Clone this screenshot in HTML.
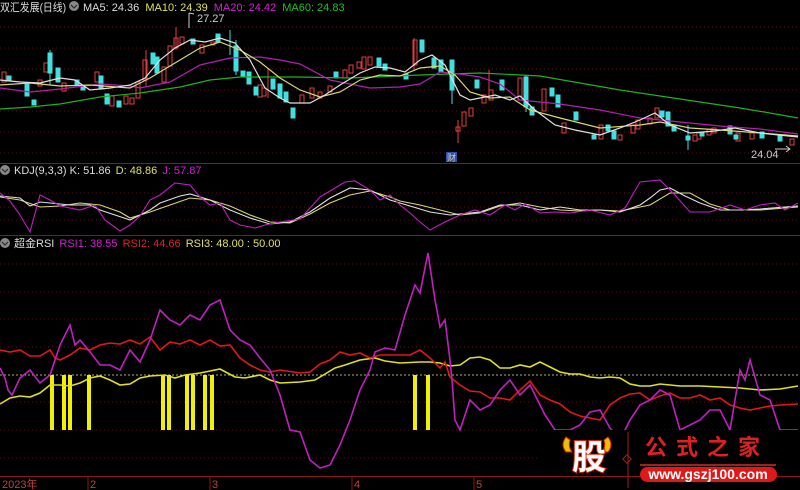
<!DOCTYPE html>
<html><head><meta charset="utf-8"><style>
body{margin:0;background:#000;width:800px;height:490px;overflow:hidden;font-family:"Liberation Sans","Noto Sans CJK SC",sans-serif}
svg{display:block}
text{font-family:"Liberation Sans","Noto Sans CJK SC",sans-serif}
</style></head><body>
<svg width="800" height="490" viewBox="0 0 800 490" xmlns="http://www.w3.org/2000/svg">
<rect width="800" height="490" fill="#000"/>
<g stroke="#5a1010" stroke-dasharray="1 3" stroke-width="1">
<line x1="0" y1="27" x2="800" y2="27"/><line x1="0" y1="48" x2="800" y2="48"/><line x1="0" y1="69" x2="800" y2="69"/><line x1="0" y1="90" x2="800" y2="90"/><line x1="0" y1="111" x2="800" y2="111"/><line x1="0" y1="132" x2="800" y2="132"/><line x1="0" y1="153" x2="800" y2="153"/>
<line x1="0" y1="193" x2="800" y2="193"/><line x1="0" y1="207" x2="800" y2="207"/><line x1="0" y1="220" x2="800" y2="220"/>
<line x1="0" y1="264" x2="800" y2="264"/><line x1="0" y1="292" x2="800" y2="292"/><line x1="0" y1="319" x2="800" y2="319"/><line x1="0" y1="347" x2="800" y2="347"/><line x1="0" y1="402" x2="800" y2="402"/><line x1="0" y1="430" x2="800" y2="430"/><line x1="0" y1="458" x2="800" y2="458"/>
</g>
<line x1="0" y1="163.5" x2="800" y2="163.5" stroke="#8a1515"/>
<line x1="0" y1="235.5" x2="800" y2="235.5" stroke="#8a1515"/>
<line x1="0" y1="476.5" x2="800" y2="476.5" stroke="#8a1515"/>
<line x1="0" y1="375" x2="800" y2="375" stroke="#b0b060" stroke-dasharray="2 2"/>
<g stroke="#8a1515"><line x1="88" y1="476" x2="88" y2="490"/><line x1="210" y1="476" x2="210" y2="490"/><line x1="352" y1="476" x2="352" y2="490"/><line x1="474" y1="476" x2="474" y2="490"/></g>
<g fill="#c04040" font-size="11"><text x="2" y="488">2023年</text><text x="90" y="488">2</text><text x="212" y="488">3</text><text x="354" y="488">4</text><text x="476" y="488">5</text></g>

<g stroke-width="1">
<g stroke="#e04040" fill="none">
<rect x="2" y="72" width="4" height="10"/><rect x="38" y="80" width="4" height="6"/><rect x="44" y="63" width="4" height="9"/><rect x="62" y="83" width="4" height="8"/><rect x="95" y="72" width="4" height="10"/><rect x="110" y="96" width="4" height="10"/><rect x="124" y="96" width="4" height="8"/><rect x="130" y="98" width="4" height="6"/><rect x="136" y="82" width="4" height="16"/><rect x="143" y="60" width="4" height="20"/><rect x="162" y="67" width="4" height="15"/><rect x="168" y="46" width="4" height="20"/><rect x="174" y="38" width="4" height="10"/><rect x="180" y="37" width="4" height="7"/><rect x="200" y="45" width="4" height="8"/><rect x="211" y="42" width="4" height="3"/>
<rect x="258" y="85" width="4" height="12"/><rect x="262" y="88" width="4" height="8"/><rect x="300" y="95" width="4" height="8"/><rect x="310" y="88" width="4" height="10"/><rect x="318" y="92" width="4" height="6"/><rect x="328" y="86" width="4" height="6"/><rect x="343" y="70" width="4" height="8"/><rect x="349" y="65" width="4" height="8"/><rect x="357" y="62" width="4" height="6"/><rect x="362" y="57" width="4" height="12"/><rect x="368" y="57" width="4" height="8"/>
<rect x="413" y="40" width="4" height="25"/><rect x="456" y="127" width="4" height="4"/><rect x="462" y="112" width="4" height="14"/><rect x="469" y="108" width="4" height="8"/><rect x="482" y="95" width="4" height="8"/><rect x="489" y="90" width="4" height="10"/><rect x="518" y="78" width="4" height="22"/><rect x="542" y="89" width="4" height="22"/><rect x="562" y="123" width="4" height="10"/><rect x="599" y="125" width="4" height="14"/><rect x="618" y="135" width="4" height="5"/><rect x="631" y="125" width="4" height="8"/><rect x="636" y="120" width="4" height="9"/><rect x="648" y="118" width="4" height="6"/><rect x="655" y="108" width="4" height="10"/><rect x="693" y="135" width="4" height="6"/><rect x="697" y="133" width="4" height="6"/><rect x="707" y="129" width="4" height="6"/><rect x="712" y="128" width="4" height="5"/><rect x="736" y="133" width="4" height="8"/><rect x="750" y="133" width="4" height="6"/><rect x="790" y="139" width="4" height="6"/>
</g>
<g stroke="#40e0e0" fill="#40e0e0">
<rect x="7" y="76" width="4" height="5"/><rect x="25" y="84" width="4" height="12"/><rect x="32" y="100" width="4" height="5"/><rect x="48" y="53" width="4" height="20"/><rect x="56" y="68" width="4" height="14"/><rect x="75" y="80" width="4" height="5"/><rect x="81" y="86" width="4" height="4"/><rect x="99" y="76" width="4" height="13"/><rect x="105" y="94" width="4" height="10"/><rect x="117" y="101" width="4" height="6"/><rect x="151" y="53" width="4" height="11"/><rect x="155" y="57" width="4" height="16"/><rect x="191" y="39" width="4" height="5"/><rect x="216" y="34" width="4" height="8"/><rect x="234" y="46" width="4" height="25"/><rect x="241" y="71" width="4" height="5"/><rect x="247" y="72" width="4" height="12"/><rect x="254" y="87" width="4" height="8"/><rect x="271" y="79" width="4" height="10"/><rect x="278" y="84" width="4" height="14"/><rect x="284" y="92" width="4" height="10"/><rect x="291" y="108" width="4" height="10"/>
<rect x="334" y="72" width="4" height="6"/><rect x="377" y="58" width="4" height="8"/><rect x="383" y="64" width="4" height="6"/><rect x="404" y="74" width="4" height="5"/><rect x="420" y="40" width="4" height="12"/><rect x="432" y="58" width="4" height="10"/><rect x="439" y="60" width="4" height="12"/><rect x="450" y="60" width="4" height="30"/><rect x="475" y="80" width="4" height="8"/><rect x="500" y="80" width="4" height="10"/><rect x="524" y="77" width="4" height="30"/><rect x="530" y="107" width="4" height="8"/><rect x="550" y="88" width="4" height="8"/><rect x="556" y="95" width="4" height="12"/><rect x="574" y="112" width="4" height="8"/><rect x="592" y="135" width="4" height="4"/><rect x="606" y="125" width="4" height="6"/><rect x="612" y="131" width="4" height="8"/><rect x="660" y="111" width="4" height="6"/><rect x="666" y="112" width="4" height="14"/><rect x="672" y="125" width="4" height="6"/><rect x="686" y="136" width="4" height="4"/><rect x="700" y="133" width="4" height="3"/><rect x="728" y="126" width="4" height="8"/><rect x="734" y="135" width="4" height="4"/><rect x="760" y="132" width="4" height="6"/><rect x="778" y="136" width="4" height="5"/>
</g>
<g stroke="#e04040"><line x1="146" y1="50" x2="146" y2="86"/><line x1="176" y1="27" x2="176" y2="50"/><line x1="414" y1="38" x2="414" y2="70"/><line x1="458" y1="120" x2="458" y2="143"/><line x1="489" y1="70" x2="489" y2="100"/><line x1="268" y1="68" x2="268" y2="98"/></g>
<g stroke="#40e0e0"><line x1="50" y1="50" x2="50" y2="85"/><line x1="236" y1="40" x2="236" y2="75"/><line x1="452" y1="60" x2="452" y2="104"/><line x1="526" y1="75" x2="526" y2="112"/><line x1="688" y1="125" x2="688" y2="150"/><line x1="230" y1="30" x2="230" y2="55"/></g>
</g>
<g fill="none" stroke-width="1.2">
<polyline stroke="#20b020" points="0,109 30,107 60,104 100,97 140,93 180,87 210,80 240,77 300,77 350,78 420,75 480,73 540,76 580,83 620,90 660,96 700,102 740,108 770,113 798,118"/>
<polyline stroke="#b020b0" points="0,88 30,92 60,89 100,84 130,86 140,88 170,82 200,65 230,58 260,57 280,60 300,64 330,80 370,88 400,87 420,84 440,72 460,74 480,77 500,84 520,100 560,104 600,110 640,118 680,122 720,126 760,129 798,134"/>
<polyline stroke="#d8d870" points="0,85 30,83 60,86 90,85 130,88 150,78 180,60 200,48 220,42 240,50 260,62 280,78 300,90 320,97 340,92 360,80 380,75 400,76 420,68 440,66 455,75 470,92 490,98 510,97 530,110 560,118 600,128 640,125 660,122 690,128 720,130 760,133 798,136"/>
<polyline stroke="#e0e0e0" points="0,80 20,82 40,83 60,78 75,80 90,90 110,88 130,85 145,78 160,60 175,48 190,40 205,42 220,38 235,43 250,60 265,88 280,98 290,103 310,103 325,95 340,85 360,73 375,67 390,68 405,72 420,60 432,55 445,65 460,95 470,100 480,98 495,95 510,100 520,96 535,110 555,125 575,130 600,135 620,128 640,120 655,113 670,125 690,133 715,131 735,128 760,133 798,137"/>
</g>
<g stroke="#ccc" fill="none"><path d="M189 13 L189 28 M189 13 L194 14"/><path d="M775 149 L790 149 M786 146 L790 149 L786 152"/></g>
<text x="197" y="22" fill="#ccc" font-size="11">27.27</text>
<text x="751" y="158" fill="#ccc" font-size="11">24.04</text>
<rect x="446" y="152" width="11" height="10" fill="#3050a0"/><text x="447" y="161" fill="#ccc" font-size="9">财</text>

<text x="0" y="11" font-size="11" fill="#ddd" textLength="66" lengthAdjust="spacingAndGlyphs">双汇发展(日线)</text>
<circle cx="74" cy="6" r="5" fill="#888"/><path d="M71 5 L74 8 L77 5" stroke="#222" fill="none"/>
<text x="83" y="11" font-size="11"><tspan fill="#ddd">MA5: 24.36 </tspan><tspan fill="#e0e060" dx="3">MA10: 24.39 </tspan><tspan fill="#d020d0" dx="3">MA20: 24.42 </tspan><tspan fill="#20c020" dx="3">MA60: 24.83</tspan></text>

<circle cx="5" cy="170" r="5" fill="#888"/><path d="M2 169 L5 172 L8 169" stroke="#222" fill="none"/>
<text x="14" y="174" font-size="11"><tspan fill="#ddd">KDJ(9,3,3)  K: 51.86 </tspan><tspan fill="#e0e060" dx="2">D: 48.86 </tspan><tspan fill="#d020d0" dx="2">J: 57.87</tspan></text>
<g fill="none" stroke-width="1.1">
<polyline stroke="#d8d870" points="0,197 20,200 40,207 60,206 80,203 100,205 120,212 130,218 150,212 170,205 190,198 210,200 230,206 250,215 270,222 290,223 310,214 330,203 350,195 370,191 390,197 400,201 420,205 440,210 460,215 480,213 500,206 520,203 540,207 560,210 580,211 600,210 620,211 650,205 670,193 690,193 710,204 730,210 760,210 798,207"/>
<polyline stroke="#e0e0e0" points="0,196 20,198 30,206 40,202 50,203 70,205 90,205 100,210 130,220 150,210 160,203 180,196 190,194 210,200 230,210 250,218 270,224 290,222 310,212 330,198 350,188 370,190 390,200 410,206 430,212 450,215 480,212 500,205 520,205 540,210 560,207 580,210 600,210 620,212 640,205 650,198 660,190 670,188 685,196 700,203 720,210 740,210 760,209 798,206"/>
<polyline stroke="#c020c0" points="0,193 10,201 20,215 30,232 40,195 50,200 60,206 80,210 95,205 105,220 120,231 130,225 140,216 150,200 160,195 175,183 190,185 200,197 210,205 220,203 230,220 240,225 255,228 265,225 280,222 300,219 320,197 335,188 345,182 355,181 370,190 380,200 390,195 400,205 410,213 420,222 430,230 445,222 460,215 475,210 490,215 505,205 515,210 525,204 540,213 555,212 570,213 590,210 610,215 625,208 640,182 660,180 675,195 690,212 710,212 730,205 745,210 760,205 775,203 785,210 798,203"/>
</g>

<circle cx="5" cy="243" r="5" fill="#888"/><path d="M2 242 L5 245 L8 242" stroke="#222" fill="none"/>
<text x="14" y="247" font-size="11"><tspan fill="#ddd">超金RSI  </tspan><tspan fill="#d020d0" dx="2">RSI1: 38.55 </tspan><tspan fill="#e02020" dx="2">RSI2: 44.66 </tspan><tspan fill="#e0e060" dx="2">RSI3: 48.00 : 50.00</tspan></text>

<g fill="#f0f000">
<rect x="50" y="375" width="4" height="55"/><rect x="62" y="375" width="4" height="55"/><rect x="68" y="375" width="4" height="55"/><rect x="87" y="375" width="4" height="55"/>
<rect x="161" y="375" width="4" height="55"/><rect x="167" y="375" width="4" height="55"/><rect x="185" y="375" width="4" height="55"/><rect x="191" y="375" width="4" height="55"/><rect x="203" y="375" width="4" height="55"/><rect x="210" y="375" width="4" height="55"/>
<rect x="413" y="375" width="4" height="55"/><rect x="426" y="375" width="4" height="55"/>
</g>
<g fill="none" stroke-width="1.6">
<polyline stroke="#e0e020" points="0,404 10,398 20,396 30,397 40,393 50,385 60,385 70,386 80,383 90,378 100,376 110,380 120,385 130,384 140,378 150,376 165,375 175,378 185,375 200,373 210,371 220,369 235,377 245,378 260,375 270,380 280,383 300,382 315,380 325,374 335,368 345,365 360,360 375,358 385,361 400,363 420,362 430,362 440,363 450,366 460,365 470,358 480,357 490,360 500,368 510,368 520,365 530,367 540,362 550,367 560,372 570,374 580,374 590,377 600,378 610,377 620,378 630,384 640,386 650,386 660,384 670,385 680,386 700,386 720,387 740,388 760,390 780,389 798,386"/>
<polyline stroke="#e01818" points="0,350 10,352 20,350 30,356 40,356 50,350 55,358 60,360 70,355 80,348 90,350 100,345 110,343 120,344 130,340 140,344 150,337 160,350 170,342 180,344 190,340 200,345 210,340 220,346 230,345 240,358 250,365 260,370 270,372 280,370 300,373 310,372 320,364 330,360 340,352 350,355 360,353 370,358 380,355 390,355 400,355 410,355 420,350 430,358 440,368 445,362 450,377 460,385 470,391 480,392 490,398 500,398 510,400 520,390 530,381 540,395 550,400 560,404 570,412 580,416 600,420 610,405 620,398 630,394 640,393 650,400 660,396 670,393 680,398 690,398 700,395 710,400 720,398 730,405 740,408 750,410 760,408 770,406 780,405 798,404"/>
<polyline stroke="#c020c0" points="0,368 5,378 8,390 12,395 20,378 30,370 40,383 50,375 60,345 70,325 75,345 80,340 90,352 100,365 110,365 120,370 130,350 140,362 150,340 160,310 170,320 180,325 190,315 200,320 210,305 220,300 230,330 240,340 250,345 260,358 270,370 280,395 290,430 300,432 310,460 320,468 330,465 340,445 350,420 360,390 370,370 375,352 385,348 395,350 405,315 415,285 420,293 428,253 435,300 440,327 445,320 450,360 452,380 455,420 460,430 470,400 480,410 490,405 500,390 510,380 520,395 530,385 535,395 545,415 555,430 570,430 580,425 590,412 600,410 610,428 620,440 630,420 640,405 650,400 660,390 670,395 680,430 700,420 710,410 720,410 730,430 740,370 745,380 750,360 760,395 770,400 780,430 790,430 798,430"/>
</g>

<rect x="540" y="430" width="260" height="46" fill="#000"/>
<g>
<path d="M566 437 Q560 445 566 452 L572 452 Q568 447 570 440 Z" fill="#e8c000" stroke="#e02000"/>
<path d="M608 437 Q614 445 608 452 L602 452 Q606 447 604 440 Z" fill="#e8c000" stroke="#e02000"/>
<text x="572" y="469" font-size="34" font-weight="bold" fill="#fff" stroke="#e02000" stroke-width="2" paint-order="stroke" font-family="Noto Sans CJK SC,sans-serif">股</text>
<line x1="628" y1="432" x2="628" y2="488" stroke="#a02020"/>
<rect x="624" y="456" width="6" height="6" fill="none" stroke="#a02020" transform="rotate(45 627 459)"/>
<text x="645" y="455" font-size="22" font-weight="bold" fill="#e02020" font-family="Noto Serif CJK SC,serif" letter-spacing="9">公式之家</text>
<line x1="640" y1="465" x2="776" y2="465" stroke="#a02020" stroke-width="2"/>
<rect x="640" y="467" width="137" height="15" rx="7.5" fill="#e01818"/>
<text x="708" y="479" font-size="14" font-weight="bold" fill="#fff" text-anchor="middle">www.gszj100.com</text>
</g>
</svg>
</body></html>
